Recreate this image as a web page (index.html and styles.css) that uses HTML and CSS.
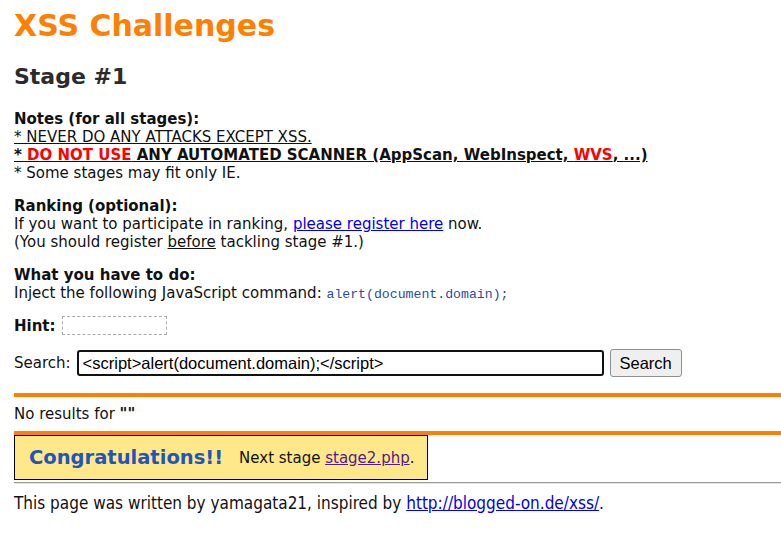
FILE: index.html
```html
<!DOCTYPE html>
<html>
<head>
<meta charset="utf-8">
<title>XSS Challenges (by yamagata21) - Stage #1</title>
<link rel="stylesheet" href="styles.css">
</head>
<body>
<h1 class="title">XSS Challenges</h1>
<h2 class="stage">Stage #1</h2>

<div class="block first">
  <b>Notes (for all stages):</b><br>
  <u>* NEVER DO ANY ATTACKS EXCEPT XSS.</u><br>
  <u><b>* <span class="red">DO NOT USE</span> ANY AUTOMATED SCANNER (AppScan, WebInspect, <span class="red">WVS</span>, ...)</b></u><br>
  * Some stages may fit only IE.
</div>

<div class="block">
  <b>Ranking (optional):</b><br>
  If you want to participate in ranking, <a href="#" class="link">please register here</a> now.<br>
  (You should register <u>before</u> tackling stage #1.)
</div>

<div class="block">
  <b>What you have to do:</b><br>
  Inject the following JavaScript command: <code class="code">alert(document.domain);</code>
</div>

<div class="hint-row"><b>Hint:</b> <span class="hint"></span></div>

<form class="search-row">
  <span>Search:</span>
  <input class="search-input" type="text" value="&lt;script&gt;alert(document.domain);&lt;/script&gt;">
  <button class="search-btn" type="button">Search</button>
</form>

<div class="rule rule-top"></div>
<div class="result">No results for <b>""</b></div>
<div class="rule"></div>

<div class="congrats"><span class="congrats-title">Congratulations!!</span><span class="next">Next stage <a href="#" class="visited">stage2.php</a>.</span></div>

<div class="foot-rule"></div>
<div class="footer">This page was written by yamagata21, inspired by <a href="#" class="link">http://blogged-on.de/xss/</a>.</div>
</body>
</html>
```

FILE: styles.css
```css
html, body { margin: 0; padding: 0; background: #fff; }
body {
  padding: 0 0 0 14px;
  font-family: "DejaVu Sans", Verdana, sans-serif;
  font-size: 15px;
  line-height: 18px;
  color: #111;
}
.title {
  margin: 8px 0 0 0;
  font-size: 30px;
  line-height: 36px;
  color: #ff8000;
  font-weight: bold;
}
.stage {
  margin: 20px 0 0 0;
  font-size: 22px;
  line-height: 26px;
  color: #2b2b2b;
}
.block { margin-top: 15px; }
.block.first { margin-top: 20px; }
.red { color: #ff0000; }
.link { color: #0000ee; }
.visited { color: #551a8b; }
.code {
  font-family: "Liberation Mono", monospace;
  font-size: 13.2px;
  color: #2a4d9f;
}
.hint-row {
  margin-top: 11px;
  display: flex;
  align-items: center;
  gap: 6px;
  height: 21px;
}
.hint {
  display: inline-block;
  width: 103px;
  height: 17px;
  border: 1px dashed #aaa;
}
.search-row {
  margin: 13px 0 0 0;
  display: flex;
  align-items: center;
  gap: 6px;
}
.search-input {
  width: 515px;
  height: 22px;
  box-sizing: content-box;
  padding: 0 4px;
  margin: 0;
  border: 2px solid #111;
  border-radius: 3px;
  font-family: "Liberation Sans", Arial, sans-serif;
  font-size: 16.5px;
  color: #000;
}
.search-btn {
  height: 28px;
  width: 72px;
  padding: 0;
  margin: 0;
  border: 1px solid #8f8f8f;
  border-radius: 3px;
  background: #efefef;
  font-family: "Liberation Sans", Arial, sans-serif;
  font-size: 16.5px;
  color: #000;
}
.rule {
  height: 3px;
  border-top: 1px solid #999;
  background: #ff8000;
}
.rule-top { margin-top: 16px; }
.result { padding: 8px 0 8px 0; }
.congrats {
  width: 412px;
  height: 43px;
  border: 1px solid #000;
  background: #ffe88a;
  display: flex;
  align-items: center;
}
.congrats-title {
  margin-left: 14px;
  font-size: 19.5px;
  font-weight: bold;
  color: #2255bb;
}
.next { margin-left: 16px; }
.foot-rule {
  margin-top: 2px;
  border-top: 1px solid #999;
  border-bottom: 1px solid #e5e5e5;
}
.footer {
  margin-top: 9px;
  font-family: "DejaVu Sans Condensed", "Liberation Sans", sans-serif;
  font-size: 17px;
  line-height: 20px;
}
```
